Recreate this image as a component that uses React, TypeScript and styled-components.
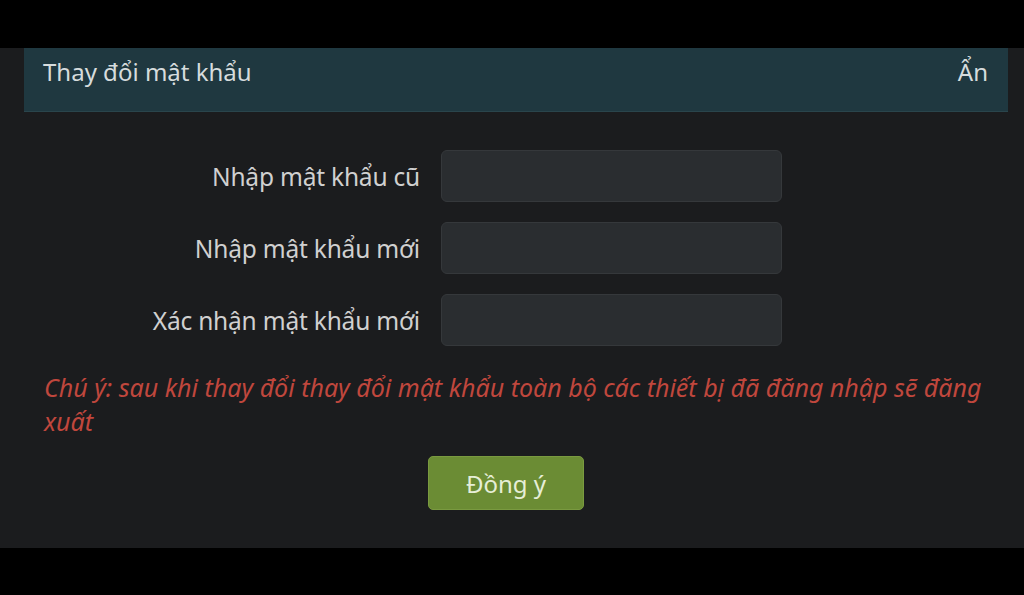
import React from "react";
import styled, { createGlobalStyle } from "styled-components";

const Global = createGlobalStyle`
  html, body { margin: 0; padding: 0; background: #000; }
  body { font-family: "Noto Sans", "Open Sans", sans-serif; }
  * { box-sizing: border-box; }
`;

const Page = styled.div`
  width: 1024px;
  height: 595px;
  background: #000;
  padding-top: 48px;
`;

const Panel = styled.div`
  height: 500px;
  background: #1b1c1e;
  padding: 0 16px 0 24px;
  display: flex;
  flex-direction: column;
`;

const Header = styled.div`
  height: 64px;
  background: #1f3840;
  border-bottom: 1px solid #2a454c;
  display: flex;
  align-items: flex-start;
  justify-content: space-between;
  padding: 7px 20px 0 19px;
  color: #d6dcdd;
  font-size: 24px;
  line-height: 34px;
  margin-bottom: 38px;
`;

const HideLink = styled.span`
  color: #d6dcdd;
`;

const Form = styled.div`
  display: flex;
  flex-direction: column;
  gap: 20px;
`;

const Row = styled.div`
  display: grid;
  grid-template-columns: 396px 341px;
  column-gap: 21px;
  align-items: center;
`;

const Label = styled.label`
  text-align: right;
  color: #d0d0d0;
  font-size: 24.5px;
  letter-spacing: -0.2px;
`;

const Input = styled.input`
  height: 52px;
  background: #2a2d30;
  border: 1px solid #35383b;
  border-radius: 6px;
  outline: none;
  color: #ddd;
  font-size: 18px;
  padding: 0 12px;
`;

const Note = styled.p`
  margin: 24px 0 0 20px;
  color: #c0473d;
  font-style: italic;
  font-size: 25px;
  line-height: 34px;
`;

const Actions = styled.div`
  display: flex;
  justify-content: center;
  margin-top: 18px;
  padding-right: 20px;
`;

const Button = styled.button`
  width: 156px;
  height: 54px;
  background: #6b8c34;
  border: 1px solid #7a9a40;
  border-radius: 5px;
  color: #e6eed7;
  font-family: inherit;
  font-size: 24px;
  cursor: pointer;
`;

const fields = ["Nhập mật khẩu cũ", "Nhập mật khẩu mới", "Xác nhận mật khẩu mới"];

export default function App() {
  return (
    <>
      <Global />
      <Page>
        <Panel>
          <Header>
            <span>Thay đổi mật khẩu</span>
            <HideLink>Ẩn</HideLink>
          </Header>
          <Form>
            {fields.map((f) => (
              <Row key={f}>
                <Label>{f}</Label>
                <Input type="password" />
              </Row>
            ))}
          </Form>
          <Note>
            Chú ý: sau khi thay đổi thay đổi mật khẩu toàn bộ các thiết bị đã đăng nhập sẽ đăng xuất
          </Note>
          <Actions>
            <Button>Đồng ý</Button>
          </Actions>
        </Panel>
      </Page>
    </>
  );
}
